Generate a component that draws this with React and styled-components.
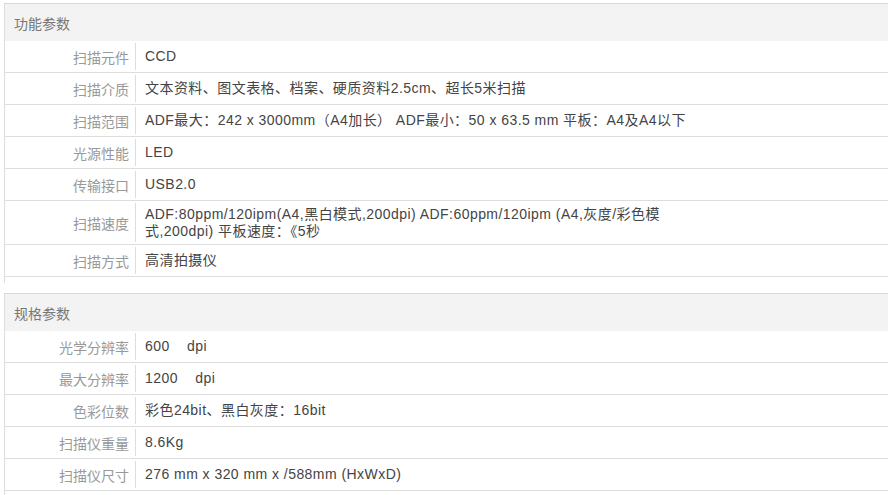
import React from 'react'
import styled, { createGlobalStyle } from 'styled-components'

const GlobalStyle = createGlobalStyle`
    html, body {
        margin: 0;
        padding: 0;
        background: #ffffff;
    }
    body {
        font-family: "Liberation Sans", "Noto Sans CJK SC", sans-serif;
        font-size: 14px;
    }
`

const Page = styled.div`
    padding: 3px 4px 0 4px;
    display: flex;
    flex-direction: column;
    gap: 10px;
`

const Section = styled.div`
    border-top: 1px solid #d9d9d9;
    border-left: 1px solid #dedede;
    padding-bottom: 6px;
`

const SectionTitle = styled.div`
    height: 37px;
    background: #f3f3f3;
    color: #777777;
    display: flex;
    align-items: center;
    padding-left: 9px;
`

const Row = styled.div`
    display: flex;
    align-items: stretch;
    min-height: 31px;
    border-bottom: 1px solid #dddddd;
`

const Label = styled.div`
    width: 131px;
    flex-shrink: 0;
    margin: 2px 0;
    padding-right: 6px;
    box-sizing: border-box;
    border-right: 1px solid #dddddd;
    display: flex;
    align-items: center;
    justify-content: flex-end;
    color: #999999;
`

const Value = styled.div`
    max-width: 560px;
    padding: 4.5px 0 4.5px 9px;
    display: flex;
    align-items: center;
    line-height: 17px;
    letter-spacing: 0.45px;
    color: #444444;
    white-space: pre-wrap;
`

const sections = [
    {
        title: '功能参数',
        rows: [
            ['扫描元件', 'CCD'],
            ['扫描介质', '文本资料、图文表格、档案、硬质资料2.5cm、超长5米扫描'],
            ['扫描范围', 'ADF最大：242 x 3000mm（A4加长） ADF最小：50 x 63.5 mm 平板：A4及A4以下'],
            ['光源性能', 'LED'],
            ['传输接口', 'USB2.0'],
            ['扫描速度', 'ADF:80ppm/120ipm(A4,黑白模式,200dpi) ADF:60ppm/120ipm (A4,灰度/彩色模式,200dpi) 平板速度：《5秒'],
            ['扫描方式', '高清拍摄仪'],
        ],
    },
    {
        title: '规格参数',
        rows: [
            ['光学分辨率', '600    dpi'],
            ['最大分辨率', '1200    dpi'],
            ['色彩位数', '彩色24bit、黑白灰度：16bit'],
            ['扫描仪重量', '8.6Kg'],
            ['扫描仪尺寸', '276 mm x 320 mm x /588mm (HxWxD)'],
        ],
    },
]

const App = () => {
    return (
        <>
            <GlobalStyle />
            <Page>
                {sections.map((section) => (
                    <Section key={section.title}>
                        <SectionTitle>{section.title}</SectionTitle>
                        {section.rows.map(([label, value]) => (
                            <Row key={label}>
                                <Label>{label}</Label>
                                <Value>{value}</Value>
                            </Row>
                        ))}
                    </Section>
                ))}
            </Page>
        </>
    )
}

export default App
